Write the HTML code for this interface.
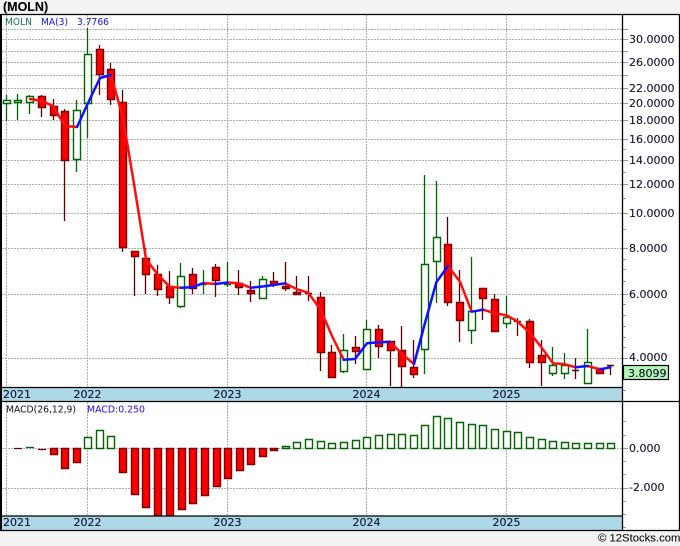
<!DOCTYPE html>
<html><head><meta charset="utf-8"><title>MOLN</title>
<style>
html,body{margin:0;padding:0;background:#f3f3f3;width:680px;height:546px;overflow:hidden}
svg{display:block}
text{font-family:"DejaVu Sans",sans-serif;font-size:11px;fill:#111133;stroke:#111133;stroke-width:.12}
.s{font-size:10px;stroke-width:.05}
.t{font-family:"Liberation Sans",sans-serif}
</style></head><body>
<svg width="680" height="546" viewBox="0 0 680 546" xmlns="http://www.w3.org/2000/svg">
<rect x="0" y="0" width="680" height="546" fill="#f3f3f3"/>
<rect x="0" y="14" width="680" height="517" fill="#fff"/>
<!-- grid -->
<path fill="none" stroke="#b0b0b0" stroke-width="1" stroke-dasharray="2 1" d="M2 29.5H622M2 39.5H622M2 51.5H622M2 62.5H622M2 75.5H622M2 88.5H622M2 103.5H622M2 120.5H622M2 139.5H622M2 160.5H622M2 184.5H622M2 213.5H622M2 248.5H622M2 294.5H622M2 358.5H622M2 448.5H622M2 488.5H622M6.5 15V516M87.5 15V516M227.5 15V516M366.5 15V516M506.5 15V516"/>
<!-- wicks -->
<path fill="none" stroke="#5c0000" stroke-width="1.300" d="M41.5 95V117M53.5 99V120M64.5 109V221M99.5 45V95M110.5 63V105M122.5 90V252M134.5 251V296M145.5 248V294M157.5 265V296M169.5 271V304M192.5 268V294M215.5 264V297M238.5 270V295M250.5 281V302M273.5 272V287M285.5 262V291M296.5 276V295M308.5 276V301M320.5 292V371M331.5 345V377M355.5 336V364M378.5 325V358M390.5 341V386M401.5 326V387M413.5 340V378M447.5 217V306M459.5 270V342M482.5 288V320M494.5 294V331M517.5 318V336M529.5 319V368M541.5 340V386M575.5 358V379M599.5 368V373M610.5 365V375"/>
<path fill="none" stroke="#006400" stroke-width="1.300" d="M6.5 95V121M17.5 94V120M29.5 95V114M76.5 100V172M87.5 28V138M180.5 263V308M203.5 270V294M227.5 262V287M262.5 276V298M343.5 334V373M366.5 320V369M424.5 175V374M436.5 181V303M471.5 257V344M506.5 296V328M552.5 347V376M564.5 353V379M587.5 329V383"/>
<!-- red bodies -->
<path fill="#ff0000" stroke="#7a0000" stroke-width="1.400" d="M38.5 96.500h7v11h-7zM50.500 106.500h7v9h-7zM61.500 111.500h7v49h-7zM96.500 49.500h7v25h-7zM107.500 69.500h7v30h-7zM119.500 102.500h7v145h-7zM131.500 251.500h7v5h-7zM142.500 258.500h7v16h-7zM154.500 274.500h7v15h-7zM166.500 286.500h7v11h-7zM189.500 274.500h7v14h-7zM212.500 267.500h7v13h-7zM235.500 283.500h7v4h-7zM247.500 290.500h7v3h-7zM270.500 281.500h7v3h-7zM282.500 286.500h7v2h-7zM293.500 292.500h7v2h-7zM317.500 297.500h7v55h-7zM328.500 352.500h7v25h-7zM352.500 347.500h7v4h-7zM375.500 329.500h7v17h-7zM387.500 341.500h7v9h-7zM398.500 350.500h7v16h-7zM410.500 367.500h7v7h-7zM444.500 244.500h7v58h-7zM456.500 302.500h7v18h-7zM479.500 288.500h7v10h-7zM491.500 299.500h7v32h-7zM526.500 321.500h7v41h-7zM538.500 355.500h7v7h-7zM596.500 368.500h7v5h-7z"/>
<path fill="none" stroke="#5c0000" stroke-width="1.400" d="M305 293.500h7M514 321.500h7M572 370.500h7M607 365.500h7"/>
<!-- green bodies -->
<path fill="#fff" stroke="#006400" stroke-width="1.400" d="M3.500 100.500h7v3h-7zM14.500 100.500h7v2h-7zM26.500 96.500h7v6h-7zM73.500 110.500h7v49h-7zM84.500 54.500h7v49h-7zM177.500 276.500h7v30h-7zM259.500 279.500h7v19h-7zM340.500 350.500h7v21h-7zM363.500 329.500h7v40h-7zM421.500 264.500h7v85h-7zM433.500 237.500h7v24h-7zM468.500 311.500h7v19h-7zM503.500 317.500h7v6h-7zM549.500 365.500h7v8h-7zM561.500 365.500h7v8h-7zM584.500 362.500h7v21h-7z"/>
<path fill="none" stroke="#006400" stroke-width="1.400" d="M200 284.500h7M224 284.500h7"/>
<!-- moving average -->
<path fill="none" stroke="#ff0d0d" stroke-width="2.500" stroke-linejoin="round" stroke-linecap="round" d="M30 99L42 101L53 106L65 126L77 127M111 75L123 118L134.500 187L146 259L158 275L170 287L181 287.700M203.500 283L215.500 284M227.500 282.500L239 283.300L250.700 287.700M285.300 283.300L297 289.300L308.300 292.700L320.700 310L332 336L343.700 359.700M390 341.700L402 354L414 364M448 266L460 281.700L471.700 311.700M483 309.700L495 313.300L506.700 315.300L517.700 321.700L530 333L541 346.700L553 363.300L565 364.300L575.700 367.300M587.700 366L600 369.300"/>
<path fill="none" stroke="#1010ff" stroke-width="2.500" stroke-linejoin="round" stroke-linecap="round" d="M77 127L88 103L100 78L111 75M181 287.700L192.500 287.300L203.500 283M215.500 284L227.500 282.500M250.700 287.700L262.500 286.500L273.700 285L285.300 283.300M343.700 359.700L355 359L367 343.300L379 342.300L390 341.700M414 364L425 323L436.300 282.300L448 266M471.700 311.700L483 309.700M575.700 367.300L587.700 366M600 369.300L610.300 367.300"/>
<!-- MACD red -->
<path fill="#ff0000" stroke="#7a0000" stroke-width="1.400" d="M50.500 448.500h7v6h-7zM61.500 448.500h7v20h-7zM73.500 448.500h7v14h-7zM119.500 448.500h7v24h-7zM131.500 448.500h7v46h-7zM142.500 448.500h7v59h-7zM154.500 448.500h7v67h-7zM166.500 448.500h7v67h-7zM178.500 448.500h7v61h-7zM189.500 448.500h7v55h-7zM201.500 448.500h7v47h-7zM213.500 448.500h7v38h-7zM224.500 448.500h7v30h-7zM236.500 448.500h7v22h-7zM247.500 448.500h7v16h-7zM259.500 448.500h7v8h-7zM270.500 448.500h7v2h-7z"/>
<path fill="none" stroke="#5c0000" stroke-width="1.300" d="M14 448.500h8M38 449.500h8"/>
<path fill="none" stroke="#006400" stroke-width="1.300" d="M26 447.500h8"/>
<!-- MACD green -->
<path fill="#fff" stroke="#006400" stroke-width="1.400" d="M84.500 437.500h7v11h-7zM96.500 430.500h7v18h-7zM107.500 436.500h7v12h-7zM282.500 446.500h7v2h-7zM293.500 442.500h7v6h-7zM305.500 439.500h7v9h-7zM317.500 441.500h7v7h-7zM328.500 443.500h7v5h-7zM340.500 442.500h7v6h-7zM352.500 440.500h7v8h-7zM363.500 437.500h7v11h-7zM375.500 435.500h7v13h-7zM387.500 434.500h7v14h-7zM398.500 434.500h7v14h-7zM410.500 435.500h7v13h-7zM421.500 425.500h7v23h-7zM433.500 416.500h7v32h-7zM444.500 418.500h7v30h-7zM456.500 422.500h7v26h-7zM468.500 424.500h7v24h-7zM479.500 425.500h7v23h-7zM491.500 429.500h7v19h-7zM503.500 431.500h7v17h-7zM514.500 432.500h7v16h-7zM526.500 437.500h7v11h-7zM538.500 439.500h7v9h-7zM549.500 441.500h7v7h-7zM561.500 442.500h7v6h-7zM572.500 443.500h7v5h-7zM584.500 443.500h7v5h-7zM596.500 443.500h7v5h-7zM607.500 443.500h7v5h-7z"/>
<!-- year bars -->
<rect x="2" y="387" width="620" height="14" fill="#add8e6"/>
<rect x="2" y="516" width="620" height="14" fill="#add8e6"/>
<!-- axis ticks -->
<path fill="none" stroke="#999" stroke-width="1" d="M622 29.500h6M622 39.500h6M622 51.500h6M622 62.500h6M622 75.500h6M622 88.500h6M622 103.500h6M622 120.500h6M622 139.500h6M622 149.500h4M622 160.500h6M622 172.500h4M622 184.500h6M622 198.500h4M622 213.500h6M622 229.500h4M622 248.500h6M622 259.500h4M622 269.500h4M622 281.500h4M622 294.500h6M622 304.500h4M622 315.500h4M622 326.500h4M622 337.500h4M622 347.500h4M622 358.500h6M622 390.500h4M622 421.500h4M622 435.500h4M622 448.500h6M622 461.500h4M622 474.500h4M622 488.500h6M622 501.500h4M622 514.500h4M622 527.500h4"/>
<!-- frame -->
<path fill="none" stroke="#000" stroke-width="1.300" d="M0 14.500H680M622.500 14V531M679.500 14V531M0 387.500H622M0 401.500H680M0 516H622M0 530.500H680"/>
<rect x="0" y="14" width="2" height="517" fill="#000"/>
<!-- price labels -->
<text x="629" y="43">30.0000</text>
<text x="629" y="66">26.0000</text>
<text x="629" y="92">22.0000</text>
<text x="629" y="107">20.0000</text>
<text x="629" y="124">18.0000</text>
<text x="629" y="143">16.0000</text>
<text x="629" y="164">14.0000</text>
<text x="629" y="188">12.0000</text>
<text x="629" y="217">10.0000</text>
<text x="629" y="252">8.0000</text>
<text x="629" y="298">6.0000</text>
<text x="629" y="361">4.0000</text>
<rect x="623.500" y="365.500" width="45" height="14" fill="#b4f5b4" stroke="#000" stroke-width="1.200"/>
<text x="628" y="377">3.8099</text>
<text x="629" y="452">0.000</text>
<text x="629" y="491">-2.000</text>
<!-- year labels -->
<text x="3" y="398">2021</text>
<text x="73.500" y="398">2022</text>
<text x="213.500" y="398">2023</text>
<text x="352.500" y="398">2024</text>
<text x="492.500" y="398">2025</text>
<text x="3" y="526">2021</text>
<text x="73.500" y="526">2022</text>
<text x="213.500" y="526">2023</text>
<text x="352.500" y="526">2024</text>
<text x="492.500" y="526">2025</text>
<!-- legends -->
<text class="s" x="5" y="25" textLength="27" lengthAdjust="spacingAndGlyphs" style="fill:#227766;stroke:#227766">MOLN</text>
<text class="s" x="41" y="25" textLength="27" lengthAdjust="spacingAndGlyphs" style="fill:#2222dd;stroke:#2222dd">MA(3)</text>
<text class="s" x="77" y="25" textLength="32" lengthAdjust="spacingAndGlyphs" style="fill:#2222dd;stroke:#2222dd">3.7766</text>
<text class="s" x="6" y="412.500" textLength="70" lengthAdjust="spacingAndGlyphs" style="fill:#222;stroke:#222">MACD(26,12,9)</text>
<text class="s" x="87" y="412.500" textLength="58" lengthAdjust="spacingAndGlyphs" style="fill:#3311ee;stroke:#3311ee">MACD:0.250</text>
<!-- title / footer -->
<text class="t" x="3" y="11" style="font-size:12.500px;font-weight:bold;fill:#000;stroke:#000">(MOLN)</text>
<text class="t" x="598" y="541.500" style="font-size:11.300px;fill:#111;stroke:#111">© 12Stocks.com</text>
</svg>
</body></html>
